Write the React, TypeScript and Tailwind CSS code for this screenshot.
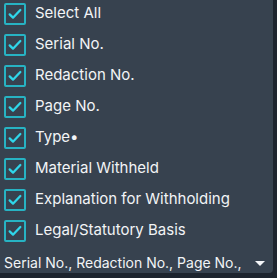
const options = [
  "Select All",
  "Serial No.",
  "Redaction No.",
  "Page No.",
  "Type•",
  "Material Withheld",
  "Explanation for Withholding",
  "Legal/Statutory Basis",
];

function CheckBox() {
  return (
    <span className="flex h-[22px] w-[22px] shrink-0 items-center justify-center rounded-[2px] border-2 border-[#27b3c3]">
      <svg viewBox="0 0 24 24" className="h-[16px] w-[16px]" fill="none" stroke="#2fd6ea" strokeWidth={3.4} strokeLinecap="round" strokeLinejoin="round">
        <path d="M4 12.5l5 5L20 6" />
      </svg>
    </span>
  );
}

export default function App() {
  return (
    <div className="h-[278px] w-[277px] overflow-hidden bg-[#1d242e] font-['Inter',sans-serif]">
      <div className="flex h-[273px] w-[273px] flex-col rounded-br-[4px] bg-[#37424f]">
        <ul className="-mt-[2px] flex flex-col">
          {options.map((o) => (
            <li key={o} className="flex h-[31px] items-center gap-[9px] pl-[4px]">
              <CheckBox />
              <span className="text-[15px] text-[#f2f4f6]">{o}</span>
            </li>
          ))}
        </ul>
        <div className="mt-auto flex h-[30px] items-center pl-[4px] pr-[8px] pt-[6px]">
          <span className="w-[238px] overflow-hidden whitespace-nowrap text-[14px] text-[#f2f4f6]">
            Serial No., Redaction No., Page No., Type•
          </span>
          <svg viewBox="0 0 10 5" className="ml-auto mt-[2px] h-[5px] w-[10px]">
            <path d="M0 0h10L5 5z" fill="#f5f6f8" />
          </svg>
        </div>
      </div>
    </div>
  );
}
